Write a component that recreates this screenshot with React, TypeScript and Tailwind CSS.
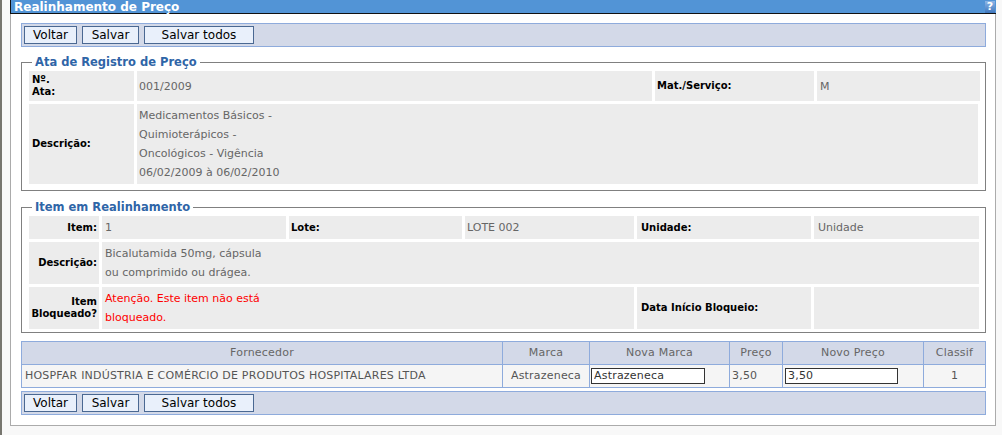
import React from "react";

function Toolbar() {
  const btn =
    "h-[18px] border border-[#4a6892] bg-[#e9f0fb] text-[12px] leading-none text-black flex items-center justify-center";
  return (
    <div className="h-[24px] border border-[#8eabdc] bg-[#d3d9e8] flex items-center gap-[5px] pl-[2px]">
      <button className={`${btn} w-[53px]`}>Voltar</button>
      <button className={`${btn} w-[57px]`}>Salvar</button>
      <button className={`${btn} w-[110px]`}>Salvar todos</button>
    </div>
  );
}

const lbl = "bg-[#ececec] text-black font-bold text-[10px] leading-[12px] flex items-center";
const val = "bg-[#ececec] text-[#666666] text-[11px] leading-[19px] flex items-center";
const legend = "ml-[3px] px-[3px] text-[11.5px] leading-[16px] font-bold text-[#2f65a7]";
const inputCls =
  "block h-[16px] border border-[#333333] bg-white text-[11px] text-[#333333] pl-[2px] tracking-[0.2px] font-['DejaVu_Sans',Verdana,sans-serif]";

export default function App() {
  return (
    <div className="w-[1002px] h-[435px] flex bg-[#f8f8f8] font-['DejaVu_Sans',Verdana,sans-serif] overflow-hidden">
      <div className="w-[2px] shrink-0 bg-[#77766f]" />
      <div className="w-[8px] shrink-0" />
      <div className="w-[986px] shrink-0 flex flex-col">
        <div className="h-[14px] bg-[#5294d6] border-l border-b border-[#111111] flex items-center justify-between">
          <span className="pl-[3px] text-white font-bold text-[12px] leading-none">
            Realinhamento de Preço
          </span>
          <span className="mr-[1px] w-[10px] h-[12px] bg-gradient-to-b from-[#8db6e6] to-[#3f77bd] text-white font-bold text-[11px] leading-[12px] text-center">
            ?
          </span>
        </div>
        <div className="bg-white border-x border-b border-[#ababab] pt-[9px] pl-[10px] pr-[9px] pb-[10px]">
          <Toolbar />

          <fieldset className="mt-[7px] border border-[#808080] pl-[7px] pt-[1px] pb-[6px]">
            <legend className={legend}>Ata de Registro de Preço</legend>
            <div className="grid grid-cols-[105px_515px_159px_163px] gap-[3px]">
              <div className={`${lbl} h-[30px] pl-[3px]`}>
                Nº.
                <br />
                Ata:
              </div>
              <div className={`${val} pl-[2px]`}>001/2009</div>
              <div className={`${lbl} pl-[2px]`}>Mat./Serviço:</div>
              <div className={`${val} pl-[3px]`}>M</div>
              <div className={`${lbl} h-[80px] pl-[3px]`}>Descrição:</div>
              <div className={`${val} col-span-3 mr-[2px] pl-[2px]`}>
                <div>
                  Medicamentos Básicos -
                  <br />
                  Quimioterápicos -
                  <br />
                  Oncológicos - Vigência
                  <br />
                  06/02/2009 à 06/02/2010
                </div>
              </div>
            </div>
          </fieldset>

          <fieldset className="mt-[8px] border border-[#808080] pl-[7px] pt-[1px] pb-[3px]">
            <legend className={legend}>Item em Realinhamento</legend>
            <div className="grid grid-cols-[70px_184px_173px_169px_174px_165px] grid-rows-[23px_42px_42px] gap-[3px]">
              <div className={`${lbl} justify-end text-right pr-[2px]`}>Item:</div>
              <div className={`${val} pl-[3px]`}>1</div>
              <div className={`${lbl} pl-[2px]`}>Lote:</div>
              <div className={`${val} pl-[2px]`}>LOTE 002</div>
              <div className={`${lbl} pl-[4px]`}>Unidade:</div>
              <div className={`${val} pl-[4px]`}>Unidade</div>

              <div className={`${lbl} justify-end text-right pr-[2px]`}>Descrição:</div>
              <div className={`${val} col-span-5 pl-[3px]`}>
                <div>
                  Bicalutamida 50mg, cápsula
                  <br />
                  ou comprimido ou drágea.
                </div>
              </div>

              <div className={`${lbl} justify-end text-right pr-[2px]`}>
                <div>
                  Item
                  <br />
                  Bloqueado?
                </div>
              </div>
              <div className={`${val} col-span-3 pl-[3px] text-[#ff0000]`}>
                <div>
                  Atenção. Este item não está
                  <br />
                  bloqueado.
                </div>
              </div>
              <div className={`${lbl} pl-[4px]`}>Data Início Bloqueio:</div>
              <div className={`${val}`}></div>
            </div>
          </fieldset>

          <table className="mt-[8px] w-full border border-[#8eabdc] border-separate border-spacing-0 table-fixed text-[11px] tracking-[0.2px]">
            <colgroup>
              <col className="w-[481px]" />
              <col className="w-[87px]" />
              <col className="w-[140px]" />
              <col className="w-[53px]" />
              <col className="w-[141px]" />
              <col />
            </colgroup>
            <thead>
              <tr className="h-[23px] bg-[#d3d9e8] text-[#666666]">
                <th className="font-normal border-r border-b border-[#8eabdc]">Fornecedor</th>
                <th className="font-normal border-r border-b border-[#8eabdc]">Marca</th>
                <th className="font-normal border-r border-b border-[#8eabdc]">Nova Marca</th>
                <th className="font-normal border-r border-b border-[#8eabdc]">Preço</th>
                <th className="font-normal border-r border-b border-[#8eabdc]">Novo Preço</th>
                <th className="font-normal border-b border-[#8eabdc]">Classif</th>
              </tr>
            </thead>
            <tbody>
              <tr className="h-[22px] bg-[#f5f5f5] text-[#555555]">
                <td className="pl-[3px] border-r border-[#8eabdc] whitespace-nowrap">
                  HOSPFAR INDÚSTRIA E COMÉRCIO DE PRODUTOS HOSPITALARES LTDA
                </td>
                <td className="text-center border-r border-[#8eabdc]">Astrazeneca</td>
                <td className="pl-[1px] border-r border-[#8eabdc]">
                  <input readOnly value="Astrazeneca" className={`${inputCls} w-[114px]`} />
                </td>
                <td className="pl-[2px] border-r border-[#8eabdc]">3,50</td>
                <td className="pl-[2px] border-r border-[#8eabdc]">
                  <input readOnly value="3,50" className={`${inputCls} w-[113px]`} />
                </td>
                <td className="text-center">1</td>
              </tr>
            </tbody>
          </table>

          <div className="mt-[3px]">
            <Toolbar />
          </div>
        </div>
      </div>
    </div>
  );
}
